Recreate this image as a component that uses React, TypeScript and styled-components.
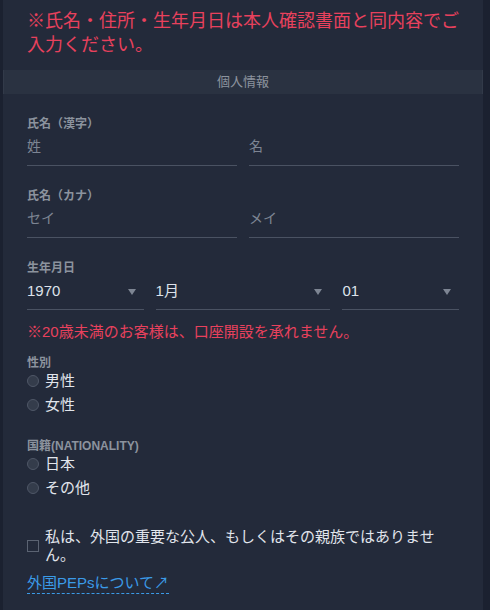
import styled, { createGlobalStyle } from 'styled-components';

const GlobalStyle = createGlobalStyle`
  html, body {
    margin: 0;
    padding: 0;
    background-color: #1b2130;
  }
  body {
    font-family: 'Liberation Sans', 'Noto Sans CJK JP', sans-serif;
  }
  * {
    box-sizing: border-box;
  }
`;

const years = ['1970'];
const months = ['1月'];
const days = ['01'];

export default function App() {
  return (
    <>
      <GlobalStyle />
      <Panel>
        <Notice>※氏名・住所・生年月日は本人確認書面と同内容でご入力ください。</Notice>

        <SectionBand>個人情報</SectionBand>

        <Form>
          <FieldGroup>
            <Label>氏名（漢字）</Label>
            <TwoColumns>
              <TextInput placeholder='姓' />
              <TextInput placeholder='名' />
            </TwoColumns>
          </FieldGroup>

          <FieldGroup>
            <Label>氏名（カナ）</Label>
            <TwoColumns>
              <TextInput placeholder='セイ' />
              <TextInput placeholder='メイ' />
            </TwoColumns>
          </FieldGroup>

          <FieldGroup $gap={15}>
            <Label>生年月日</Label>
            <DateColumns>
              <SelectWrap>
                <Select defaultValue='1970'>
                  {years.map((y) => (
                    <option key={y}>{y}</option>
                  ))}
                </Select>
                <Arrow />
              </SelectWrap>
              <SelectWrap>
                <Select defaultValue='1月'>
                  {months.map((m) => (
                    <option key={m}>{m}</option>
                  ))}
                </Select>
                <Arrow />
              </SelectWrap>
              <SelectWrap>
                <Select defaultValue='01'>
                  {days.map((d) => (
                    <option key={d}>{d}</option>
                  ))}
                </Select>
                <Arrow />
              </SelectWrap>
            </DateColumns>
            <AgeNote>※20歳未満のお客様は、口座開設を承れません。</AgeNote>
          </FieldGroup>

          <ChoiceGroup>
            <SmallLabel>性別</SmallLabel>
            <RadioRow>
              <Radio type='radio' name='gender' />
              男性
            </RadioRow>
            <RadioRow>
              <Radio type='radio' name='gender' />
              女性
            </RadioRow>
          </ChoiceGroup>

          <ChoiceGroup>
            <SmallLabel>国籍(NATIONALITY)</SmallLabel>
            <RadioRow>
              <Radio type='radio' name='nationality' />
              日本
            </RadioRow>
            <RadioRow>
              <Radio type='radio' name='nationality' />
              その他
            </RadioRow>
          </ChoiceGroup>

          <CheckRow>
            <CheckBox type='checkbox' />
            <span>私は、外国の重要な公人、もしくはその親族ではありません。</span>
          </CheckRow>

          <PepLink href='#'>外国PEPsについて↗</PepLink>
        </Form>
      </Panel>
    </>
  );
}

const Panel = styled.div`
  width: 480px;
  min-height: 610px;
  margin-left: 3px;
  background-color: #232a3a;
  font-family: 'Liberation Sans', 'Noto Sans CJK JP', sans-serif;
`;

const Notice = styled.p`
  margin: 0;
  padding: 9px 24px 13px;
  color: #e8415d;
  font-size: 18px;
  line-height: 24px;
`;

const SectionBand = styled.div`
  height: 24px;
  background-color: #2a3241;
  color: #8c939e;
  font-size: 13px;
  line-height: 24px;
  text-align: center;
  border-left: 1px solid #323a49;
  border-right: 1px solid #323a49;
`;

const Form = styled.div`
  display: flex;
  flex-direction: column;
  padding: 22px 24px 0;
`;

const FieldGroup = styled.div<{ $gap?: number }>`
  display: flex;
  flex-direction: column;
  margin-bottom: ${({ $gap }) => $gap ?? 22}px;
`;

const Label = styled.div`
  color: #8c939e;
  font-size: 12px;
  font-weight: 700;
  line-height: 16px;
`;

const SmallLabel = styled(Label)`
  line-height: 12px;
`;

const TwoColumns = styled.div`
  display: grid;
  grid-template-columns: 1fr 1fr;
  gap: 12px;
`;

const DateColumns = styled.div`
  display: grid;
  grid-template-columns: 2fr 3fr 2fr;
  gap: 12px;
`;

const TextInput = styled.input`
  width: 100%;
  height: 34px;
  padding: 0 0 5px;
  border: none;
  border-bottom: 1px solid #4a5262;
  background: transparent;
  color: #dfe3ea;
  font-family: inherit;
  font-size: 14px;
  outline: none;

  &::placeholder {
    color: #7d8593;
  }
`;

const SelectWrap = styled.div`
  position: relative;
`;

const Select = styled.select`
  width: 100%;
  height: 34px;
  padding: 0 0 4px;
  border: none;
  border-bottom: 1px solid #4a5262;
  background: transparent;
  color: #dde2ea;
  font-family: inherit;
  font-size: 15px;
  appearance: none;
  outline: none;
`;

const Arrow = styled.span`
  position: absolute;
  right: 8px;
  top: 13px;
  width: 0;
  height: 0;
  border-left: 4px solid transparent;
  border-right: 4px solid transparent;
  border-top: 6px solid #7d8593;
  pointer-events: none;
`;

const AgeNote = styled.p`
  margin: 12px 0 0;
  color: #e8415d;
  font-size: 15px;
  line-height: 20px;
`;

const ChoiceGroup = styled.div`
  display: flex;
  flex-direction: column;
  margin-bottom: 23px;
`;

const RadioRow = styled.label`
  display: flex;
  align-items: center;
  gap: 6px;
  height: 24px;
  color: #e1e5ec;
  font-size: 15px;
  line-height: 24px;
`;

const Radio = styled.input`
  appearance: none;
  width: 12px;
  height: 12px;
  margin: 0;
  border: 1px solid #4f5767;
  border-radius: 50%;
  background-color: #343c4b;
`;

const CheckRow = styled.label`
  display: flex;
  align-items: center;
  gap: 6px;
  margin-top: 5px;
  color: #e1e5ec;
  font-size: 15px;
  line-height: 18px;
`;

const CheckBox = styled.input`
  appearance: none;
  flex-shrink: 0;
  width: 12px;
  height: 12px;
  margin: 0;
  border: 1px solid #5b6372;
  background: transparent;
`;

const PepLink = styled.a`
  align-self: flex-start;
  margin-top: 9px;
  color: #3b9be8;
  font-size: 15px;
  line-height: 20px;
  text-decoration: none;
  border-bottom: 1px dashed #3b9be8;
`;
